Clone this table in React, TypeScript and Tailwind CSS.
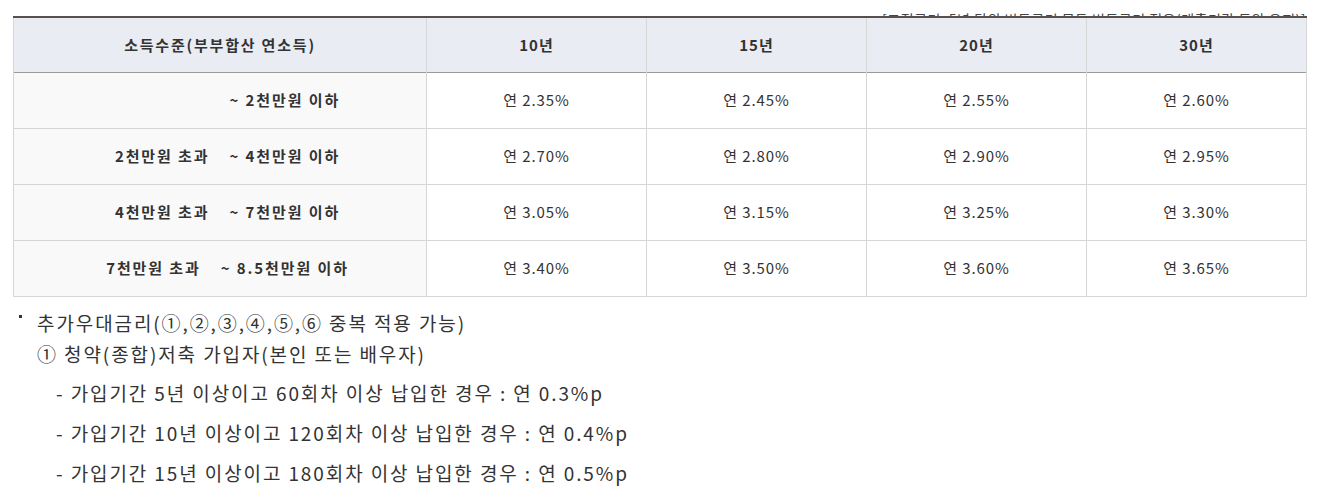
import React from "react";

const cols = ["10년", "15년", "20년", "30년"];
const rows = [
  { from: "", to: "~ 2천만원 이하", v: ["연 2.35%", "연 2.45%", "연 2.55%", "연 2.60%"] },
  { from: "2천만원 초과", to: "~ 4천만원 이하", v: ["연 2.70%", "연 2.80%", "연 2.90%", "연 2.95%"] },
  { from: "4천만원 초과", to: "~ 7천만원 이하", v: ["연 3.05%", "연 3.15%", "연 3.25%", "연 3.30%"] },
  { from: "7천만원 초과", to: "~ 8.5천만원 이하", v: ["연 3.40%", "연 3.50%", "연 3.60%", "연 3.65%"] },
];

export default function App() {
  return (
    <div
      className="w-[1337px] h-[497px] overflow-hidden bg-white text-[#333]"
      style={{ fontFamily: '"Noto Sans CJK KR", "Noto Sans", sans-serif' }}
    >
      <div className="pl-[13px] w-[1306px]">
        <div className="h-[16px] overflow-hidden flex justify-end items-end">
          <div className="text-[14px] leading-[20px] mb-[-13px] text-[#444] whitespace-nowrap tracking-[0.5px]">
            [고정금리, 5년 단위 변동금리 모두 변동금리 적용(대출기간 동안 유지)]
          </div>
        </div>
        <table className="border-collapse table-fixed w-[1293px] text-[15px]">
          <colgroup>
            <col className="w-[413px]" />
            <col className="w-[220px]" />
            <col className="w-[220px]" />
            <col className="w-[220px]" />
            <col className="w-[220px]" />
          </colgroup>
          <thead>
            <tr className="bg-[#e9ecf3] border-t-2 border-t-[#5a504b] border-b border-b-[#9a9a9a]">
              <th className="h-[55px] font-bold text-center border-l border-r border-[#d6d6d6] p-0 tracking-[1.8px]">
                소득수준(부부합산 연소득)
              </th>
              {cols.map((c) => (
                <th key={c} className="h-[55px] font-bold text-center border-r border-[#d6d6d6] p-0 tracking-[1px]">
                  {c}
                </th>
              ))}
            </tr>
          </thead>
          <tbody>
            {rows.map((r, i) => (
              <tr key={i} className="border-b border-[#d6d6d6]">
                <td className="h-[56px] bg-[#f9f9f9] border-l border-r border-[#d6d6d6] p-0 font-bold tracking-[1.9px]">
                  <div className="flex justify-center pl-[15px]">
                    <span className={r.from ? "mr-[20px]" : "mr-[20px] invisible"}>
                      {r.from || "2천만원 초과"}
                    </span>
                    <span>{r.to}</span>
                  </div>
                </td>
                {r.v.map((v, j) => (
                  <td key={j} className="h-[56px] text-center border-r border-[#d6d6d6] p-0 tracking-[0.9px]">
                    {v}
                  </td>
                ))}
              </tr>
            ))}
          </tbody>
        </table>
      </div>
      <div className="text-[19px] text-[#333] pl-[19px] mt-[10px] tracking-[1.9px]">
        <div className="flex items-start leading-[31px]">
          <span className="w-[3px] h-[3px] bg-[#333] mt-[8px] mr-[15px] shrink-0"></span>
          <span>추가우대금리(①,②,③,④,⑤,⑥ 중복 적용 가능)</span>
        </div>
        <div className="pl-[18px] leading-[31px]">① 청약(종합)저축 가입자(본인 또는 배우자)</div>
        <div className="pl-[37px] leading-[40px] mt-[4px]">
          <div>- 가입기간 5년 이상이고 60회차 이상 납입한 경우 : 연 0.3%p</div>
          <div>- 가입기간 10년 이상이고 120회차 이상 납입한 경우 : 연 0.4%p</div>
          <div>- 가입기간 15년 이상이고 180회차 이상 납입한 경우 : 연 0.5%p</div>
        </div>
      </div>
    </div>
  );
}
